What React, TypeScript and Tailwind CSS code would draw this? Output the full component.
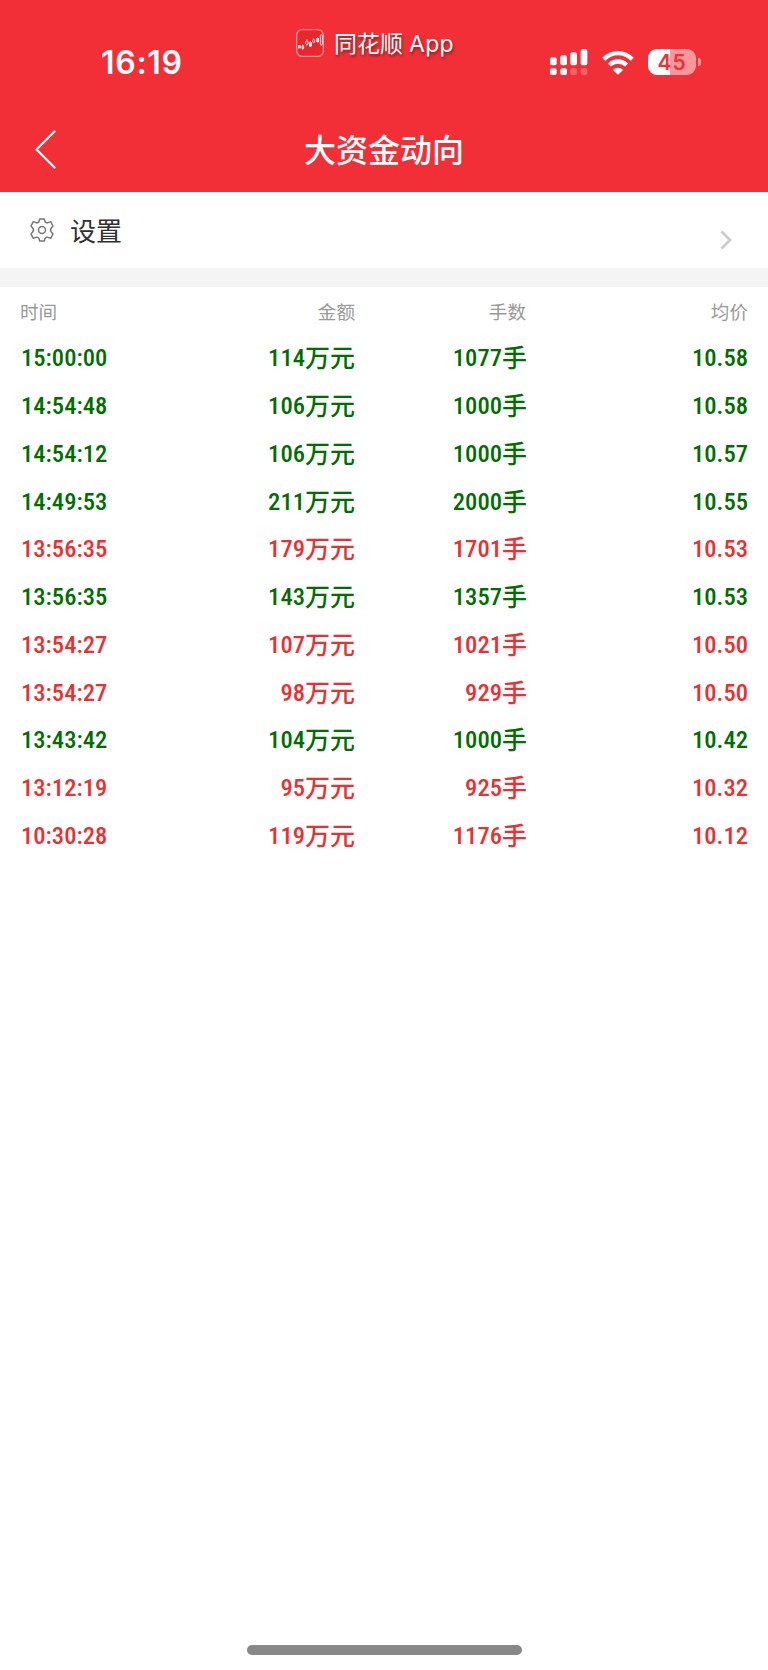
import clsx from "clsx";

type Trade = {
  time: string;
  amount: string;
  lots: string;
  price: string;
  side: "buy" | "sell";
};

const trades: Trade[] = [
  { time: "15:00:00", amount: "114", lots: "1077", price: "10.58", side: "sell" },
  { time: "14:54:48", amount: "106", lots: "1000", price: "10.58", side: "sell" },
  { time: "14:54:12", amount: "106", lots: "1000", price: "10.57", side: "sell" },
  { time: "14:49:53", amount: "211", lots: "2000", price: "10.55", side: "sell" },
  { time: "13:56:35", amount: "179", lots: "1701", price: "10.53", side: "buy" },
  { time: "13:56:35", amount: "143", lots: "1357", price: "10.53", side: "sell" },
  { time: "13:54:27", amount: "107", lots: "1021", price: "10.50", side: "buy" },
  { time: "13:54:27", amount: "98", lots: "929", price: "10.50", side: "buy" },
  { time: "13:43:42", amount: "104", lots: "1000", price: "10.42", side: "sell" },
  { time: "13:12:19", amount: "95", lots: "925", price: "10.32", side: "buy" },
  { time: "10:30:28", amount: "119", lots: "1176", price: "10.12", side: "buy" },
];

const SignalIcon = () => (
  <svg className="w-[38px] h-[26px]" viewBox="0 0 114 78" fill="#fff">
    <rect x="0" y="25" width="20" height="24" rx="6" />
    <rect x="31" y="19" width="20" height="30" rx="6" />
    <rect x="61" y="10" width="20" height="39" rx="6" />
    <rect x="92" y="0" width="20" height="49" rx="6" />
    <rect x="0" y="58" width="20" height="20" rx="6" />
    <rect x="31" y="58" width="20" height="20" rx="6" />
    <rect x="61" y="58" width="20" height="20" rx="6" opacity=".25" />
    <rect x="92" y="58" width="20" height="20" rx="6" opacity=".25" />
  </svg>
);

const WifiIcon = () => (
  <svg className="w-8 h-[25px]" viewBox="0 0 96 75" fill="none">
    <path d="M5 28C29 3 67 3 91 28" stroke="#fff" strokeWidth="13" />
    <path d="M22 45C37 31 59 31 74 45" stroke="#fff" strokeWidth="13" />
    <path d="M33 60C41 51 55 51 63 60L50 73Q48 75 46 73Z" fill="#fff" />
  </svg>
);

const BatteryIcon = () => (
  <div className="flex items-center gap-[1.5px]">
    <div className="relative flex h-[26px] w-12 items-center justify-center overflow-hidden rounded-[9px] bg-white/50">
      <div className="absolute inset-y-0 left-0 w-[22px] bg-white" />
      <span className="relative font-['Inter'] text-[21px] leading-none font-semibold tracking-[0.8px] text-[#f22f37]">
        45
      </span>
    </div>
    <div className="h-[8px] w-[3px] rounded-r-full bg-white/50" />
  </div>
);

const AppLogo = () => (
  <svg className="w-7 h-7" viewBox="0 0 84 84" fill="none">
    <rect x="2" y="2" width="80" height="80" rx="17" fill="#e8262c" stroke="#fa8f8f" strokeWidth="4" />
    <rect x="6" y="49" width="8" height="9" fill="#fff" />
    <rect x="18" y="50" width="5" height="9" rx="2" stroke="#fff" strokeWidth="2.5" />
    <path d="M20 46V62M33 31V50M43 36V54M53 28V42M65 24V42" stroke="#fff" strokeWidth="2" />
    <rect x="29" y="36" width="7" height="10" rx="2" fill="#e8262c" stroke="#fff" strokeWidth="2.5" />
    <rect x="39" y="40" width="9" height="12" fill="#fff" />
    <rect x="50" y="32" width="6" height="8" rx="2" fill="#e8262c" stroke="#fff" strokeWidth="2.5" />
    <rect x="61" y="27" width="8" height="12" fill="#fff" />
    <rect x="73" y="17" width="6" height="31" rx="3" stroke="#fff" strokeWidth="2.5" />
  </svg>
);

const GearIcon = () => (
  <svg className="w-6 h-6" viewBox="0 0 72 72" fill="none" stroke="#777" strokeWidth="4.5" strokeLinejoin="round">
    <path d="M29 3H43L45 11Q48 16 54 14L62 11L69 24L64 30Q59 36 64 42L69 48L62 61L54 58Q48 56 45 61L43 69H29L27 61Q24 56 18 58L10 61L3 48L8 42Q13 36 8 30L3 24L10 11L18 14Q24 16 27 11Z" />
    <circle cx="36" cy="36" r="10.5" />
  </svg>
);

const Header = () => (
  <header className="h-48 bg-[#f22f37] text-white">
    <div className="flex h-[108px] items-start">
      <div className="w-[296px] pt-[43px] pl-[101px] font-['Inter'] text-[32px] leading-[40px] font-[580] tracking-[0.7px]">
        16:19
      </div>
      <div className="flex w-[254px] items-start gap-[10px] pt-[29px]">
        <AppLogo />
        <span className="-mt-px text-[23px] leading-[28px] [text-shadow:1px_2px_3px_rgba(0,0,0,0.45)]">
          同花顺<span className="ml-[6px] font-['Inter'] tracking-[0.3px]">App</span>
        </span>
      </div>
      <div className="flex items-center pt-[49px]">
        <SignalIcon />
        <div className="ml-[14px]">
          <WifiIcon />
        </div>
        <div className="ml-[14px]">
          <BatteryIcon />
        </div>
      </div>
    </div>
    <div className="grid h-[84px] grid-cols-[1fr_auto_1fr] items-start">
      <svg className="mt-[22px] ml-[34px] h-10 w-6" viewBox="0 0 24 40" fill="none">
        <path d="M20.5 1.5L2.5 19.5L20.5 37.5" stroke="#fff" strokeWidth="2.2" strokeLinecap="round" />
      </svg>
      <h1 className="mt-[18px] text-[32px] leading-[44px] font-medium">大资金动向</h1>
    </div>
  </header>
);

// numbers use a narrower face than the units
const Num = ({ children }: { children: string }) => (
  <span className="font-['Roboto'] text-[24.6px] font-medium font-stretch-[82%]">{children}</span>
);

const Unit = ({ children }: { children: string }) => (
  <span className="align-[-1px]">{children}</span>
);

const App = () => {
  return (
    <div className="flex h-[1670px] w-[768px] flex-col bg-white font-['Noto_Sans_CJK_SC',sans-serif]">
      <Header />

      {/* Settings */}
      <div className="flex h-[76px] items-start">
        <div className="mt-[26px] ml-[30px]">
          <GearIcon />
        </div>
        <span className="mt-[19px] ml-4 text-[26px] leading-[38px] text-[#303030]">设置</span>
        <svg className="mt-[38px] mr-[36px] ml-auto h-5 w-3" viewBox="0 0 12 20" fill="none">
          <path d="M1.5 1.5L10 10L1.5 18.5" stroke="#ccc" strokeWidth="2.8" />
        </svg>
      </div>
      <div className="h-[19px] bg-[#f4f4f4]" />

      {/* Table */}
      <div className="grid h-[46px] grid-cols-[155px_180px_171px_222px] items-center px-5 pt-px text-right text-[18.6px] text-[#999]">
        <span className="text-left">时间</span>
        <span>金额</span>
        <span>手数</span>
        <span>均价</span>
      </div>
      {trades.map((item, i) => (
        <div
          key={i}
          className={clsx(
            "grid h-[47.75px] grid-cols-[155px_180px_172px_221px] items-center px-5 text-right text-[25px] leading-[36px] font-medium",
            item.side === "buy" ? "text-[#ea3030]" : "text-[#006e00]"
          )}
        >
          <span className="pl-px text-left"><Num>{item.time}</Num></span>
          <span><Num>{item.amount}</Num><Unit>万元</Unit></span>
          <span><Num>{item.lots}</Num><Unit>手</Unit></span>
          <span><Num>{item.price}</Num></span>
        </div>
      ))}

      <div className="mt-auto mb-[15px] h-[10px] w-[275px] self-center rounded-full bg-[#888]" />
    </div>
  );
};

export default App;
